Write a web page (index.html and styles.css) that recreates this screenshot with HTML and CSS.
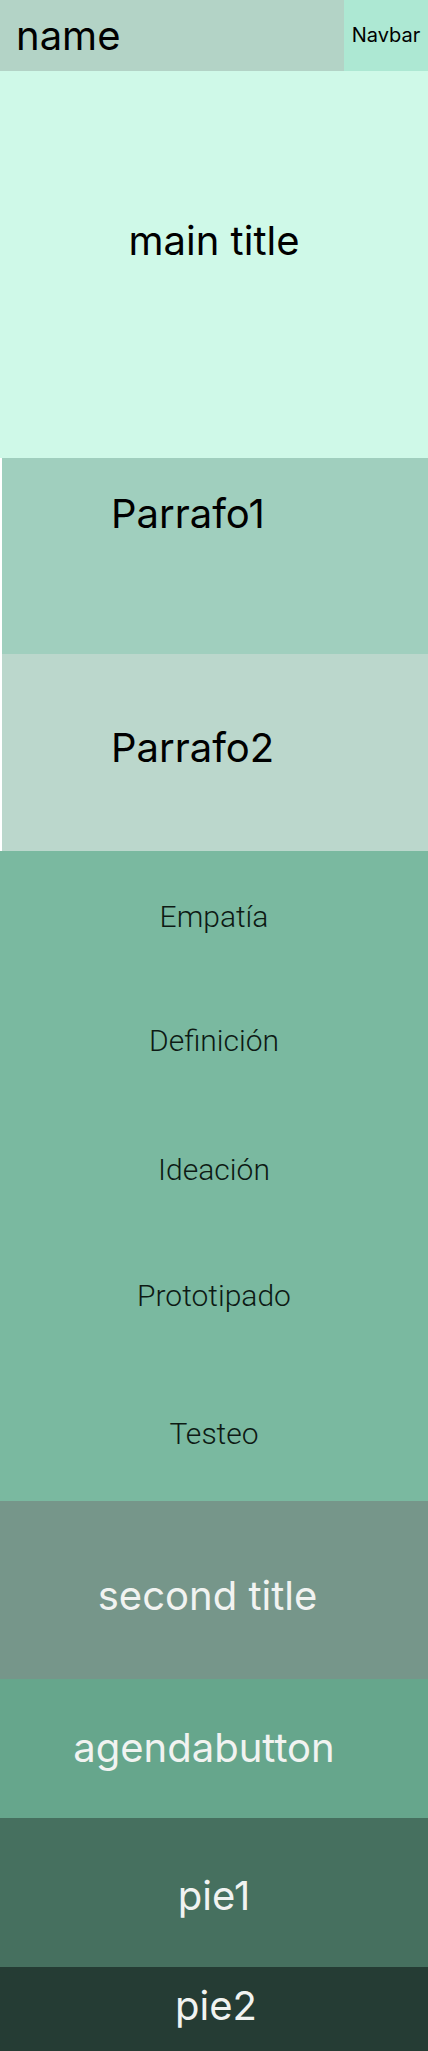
FILE: index.html
```html
<!DOCTYPE html>
<html lang="es">
<head>
<meta charset="utf-8">
<title>Page</title>
<link rel="stylesheet" href="styles.css">
</head>
<body>
<header class="header">
  <div class="name">name</div>
  <nav class="navbar">Navbar</nav>
</header>
<section class="main-title">main title</section>
<section class="paragraphs">
  <div class="parrafo parrafo1">Parrafo1</div>
  <div class="parrafo parrafo2">Parrafo2</div>
</section>
<section class="stages">
  <div class="stage s1">Empatía</div>
  <div class="stage s2">Definición</div>
  <div class="stage s3">Ideación</div>
  <div class="stage s4">Prototipado</div>
  <div class="stage s5">Testeo</div>
</section>
<section class="second-title">second title</section>
<section class="agenda">agendabutton</section>
<footer class="pie1">pie1</footer>
<footer class="pie2">pie2</footer>
</body>
</html>
```

FILE: styles.css
```css
* { box-sizing: border-box; }
html, body { margin: 0; padding: 0; background: #ffffff; }
body {
  font-family: Inter, "Noto Sans", sans-serif;
  color: #000;
  width: 428px;
}

.header {
  display: flex;
  height: 71px;
}
.name {
  flex: 0 0 344px;
  background: #b3d3c6;
  font-size: 40px;
  line-height: 71px;
  padding-left: 16px;
}
.navbar {
  flex: 1;
  background: #ade8d3;
  font-size: 20px;
  line-height: 71px;
  text-align: center;
}

.main-title {
  height: 387px;
  background: #cff9e8;
  font-size: 40px;
  text-align: center;
  padding-top: 145px;
}

.paragraphs {
  margin-left: 2px;
}
.parrafo {
  font-size: 40px;
  padding-left: 109px;
}
.parrafo1 {
  height: 196px;
  background: #a0cfbe;
  padding-top: 31px;
}
.parrafo2 {
  height: 197px;
  background: #bbd7cc;
  padding-top: 69px;
}

.stages {
  height: 650px;
  background: #7ab9a0;
  padding-top: 48px;
  display: flex;
  flex-direction: column;
  font-family: Roboto, "Noto Sans", sans-serif;
  font-weight: 300;
  font-size: 30px;
  color: #0d1a14;
}
.stage {
  text-align: center;
  line-height: 36px;
}
.s1 { height: 124px; }
.s2 { height: 129px; }
.s3 { height: 126px; }
.s4 { height: 138px; }
.s5 { height: 36px; }

.second-title,
.agenda,
.pie1,
.pie2 {
  font-size: 40px;
  color: #f1f3f1;
  text-align: center;
}
.second-title {
  height: 178px;
  background: #76968a;
  padding-top: 70px;
  padding-right: 13px;
}
.agenda {
  height: 139px;
  background: #66a68c;
  padding-top: 44px;
  padding-right: 20px;
}
.pie1 {
  height: 149px;
  background: #46705f;
  padding-top: 53px;
}
.pie2 {
  height: 84px;
  background: #253c34;
  padding-top: 14px;
  padding-left: 4px;
}
```
